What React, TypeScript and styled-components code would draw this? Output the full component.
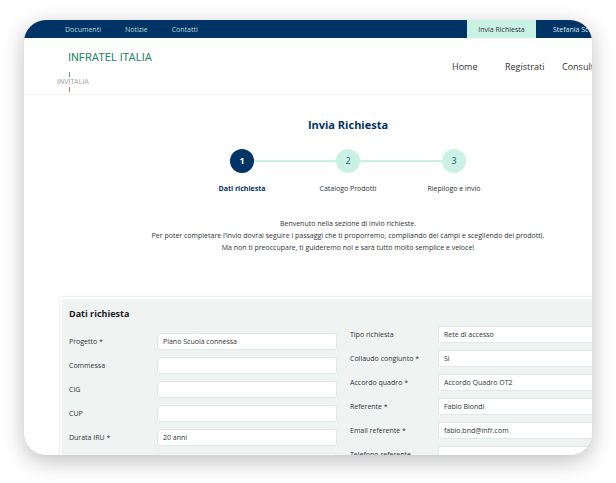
import React from "react";
import styled, { createGlobalStyle } from "styled-components";

const navy = "#003366";
const mint = "#c9f1e4";
const ink = "#2f3336";

const GlobalStyle = createGlobalStyle`
  *, *::before, *::after { box-sizing: border-box; }
  body {
    margin: 0;
    background: #ffffff;
    color: ${ink};
    font-family: "Open Sans", "Noto Sans", sans-serif;
    font-size: 7px;
    line-height: 12px;
    overflow: hidden;
  }
`;

const Stage = styled.div`
  display: flex;
  height: 100vh;
  padding: 20px 24px 28px;
`;

const Frame = styled.div`
  flex: 1;
  min-width: 0;
  overflow: hidden;
  border-radius: 22px;
  background: #ffffff;
  box-shadow: 0 6px 22px rgba(0, 0, 0, 0.26);
`;

/* The page is wider than its frame and runs out of it on the right. */
const Page = styled.div`
  width: calc(100% + 80px);
`;

const TopBar = styled.nav`
  display: flex;
  justify-content: space-between;
  height: 18px;
  padding-left: 41px;
  background: ${navy};
`;

const TopGroup = styled.div`
  display: flex;
  align-items: center;
  gap: 24px;
  padding-top: 2px;
`;

const TopLink = styled.a`
  color: #b5dcd9;
  text-decoration: none;
`;

const Account = styled.div`
  display: flex;
  align-items: center;
  width: 205px;
`;

const RequestButton = styled.button`
  align-self: stretch;
  width: 69px;
  margin-right: 17px;
  padding: 2px 0 0;
  border: 0;
  background: ${mint};
  color: ${ink};
  font: inherit;
`;

const UserLink = styled(TopLink)`
  padding-top: 2px;
  color: #dce9ee;
  white-space: nowrap;
`;

const Header = styled.header`
  display: flex;
  justify-content: space-between;
  height: 57px;
  border-bottom: 1px solid #f5f6f6;
`;

const Logo = styled.div`
  padding: 12px 0 0 33px;
`;

const LogoName = styled.div`
  padding: 1px 0 0 11px;
  color: #23875f;
  font: 11px/14px Roboto, sans-serif;
`;

const LogoBar = styled.div<{ $color: string }>`
  width: 1px;
  height: 5px;
  margin-left: 12px;
  background: ${(p) => p.$color};
`;

const LogoParent = styled.div`
  color: #a3a3a3;
  font: 7px/10px Roboto, sans-serif;
`;

const LogoGap = styled.div`
  height: 7px;
`;

const MainNav = styled.nav`
  display: grid;
  grid-template-columns: 53px 57px 110px;
  align-items: center;
  padding-top: 1px;
  font-size: 9px;
`;

const MainLink = styled.a`
  color: ${ink};
  text-decoration: none;
`;

const Title = styled.h1`
  margin: 23px 0 17px;
  color: ${navy};
  font-size: 11px;
  line-height: 14px;
  text-align: center;
`;

const Steps = styled.ol`
  display: grid;
  grid-template-columns: repeat(3, 106px);
  justify-content: center;
  margin: 0;
  padding: 0;
  list-style: none;
`;

const Step = styled.li<{ $active?: boolean }>`
  display: flex;
  flex-direction: column;
  align-items: center;
  gap: 10px;
  color: ${(p) => (p.$active ? navy : ink)};
  font-weight: ${(p) => (p.$active ? 700 : 400)};
`;

const Track = styled.div`
  display: grid;
  grid-template-columns: 1fr 24px 1fr;
  align-items: center;
  width: 100%;
`;

const Line = styled.span<{ $hidden?: boolean }>`
  height: 2px;
  background: ${(p) => (p.$hidden ? "transparent" : mint)};
`;

const Dot = styled.span<{ $active?: boolean }>`
  display: grid;
  place-items: center;
  height: 24px;
  border-radius: 50%;
  background: ${(p) => (p.$active ? navy : mint)};
  color: ${(p) => (p.$active ? "#ffffff" : "#2b5a7c")};
  font-size: 9px;
`;

const Intro = styled.p`
  margin: 23px 0 43px;
  text-align: center;
`;

const Panel = styled.form`
  margin: 0 36px;
  padding: 8px 16px 24px 7px;
  border: 2px solid #ffffff;
  background: #eff3f2;
  box-shadow: 0 0 2px rgba(0, 0, 0, 0.2);
`;

const PanelTitle = styled.h2`
  margin: 0;
  font-size: 9px;
  line-height: 14px;
  color: #1d2123;
`;

const Columns = styled.div`
  display: grid;
  grid-template-columns: 1fr 1fr;
  align-items: start;
  gap: 13px;
`;

const Column = styled.div<{ $top: number }>`
  display: grid;
  gap: 7px;
  margin-top: ${(p) => p.$top}px;
`;

const Field = styled.label`
  display: grid;
  grid-template-columns: 88px 1fr;
  align-items: center;
`;

const TextBox = styled.input`
  width: 100%;
  min-width: 0;
  height: 17px;
  padding: 0 5px;
  border: 1px solid #e2e8e6;
  border-radius: 3px;
  background: #ffffff;
  color: ${ink};
  font: inherit;
`;

type FieldData = { label: string; value: string };

const leftFields: FieldData[] = [
  { label: "Progetto *", value: "Piano Scuola connessa" },
  { label: "Commessa", value: "" },
  { label: "CIG", value: "" },
  { label: "CUP", value: "" },
  { label: "Durata IRU *", value: "20 anni" },
  { label: "", value: "" },
];

const rightFields: FieldData[] = [
  { label: "Tipo richiesta", value: "Rete di accesso" },
  { label: "Collaudo congiunto *", value: "Si" },
  { label: "Accordo quadro *", value: "Accordo Quadro OT2" },
  { label: "Referente *", value: "Fabio Biondi" },
  { label: "Email referente *", value: "fabio.bnd@infr.com" },
  { label: "Telefono referente", value: "" },
];

const steps = ["Dati richiesta", "Catalogo Prodotti", "Riepilogo e invio"];

function FieldColumn({ fields, top }: { fields: FieldData[]; top: number }) {
  return (
    <Column $top={top}>
      {fields.map((f, i) => (
        <Field key={i}>
          <span>{f.label}</span>
          <TextBox type="text" defaultValue={f.value} />
        </Field>
      ))}
    </Column>
  );
}

export default function App() {
  return (
    <>
      <GlobalStyle />
      <Stage>
        <Frame>
          <Page>
            <TopBar>
              <TopGroup>
                <TopLink href="#documenti">Documenti</TopLink>
                <TopLink href="#notizie">Notizie</TopLink>
                <TopLink href="#contatti">Contatti</TopLink>
              </TopGroup>
              <Account>
                <RequestButton type="button">Invia Richiesta</RequestButton>
                <UserLink href="#profilo">Stefania Sco</UserLink>
              </Account>
            </TopBar>
            <Header>
              <Logo>
                <LogoName>INFRATEL ITALIA</LogoName>
                <LogoGap />
                <LogoBar $color="#4fa283" />
                <LogoParent>INVITALIA</LogoParent>
                <LogoBar $color="#dc6b6b" />
              </Logo>
              <MainNav>
                <MainLink href="#home">Home</MainLink>
                <MainLink href="#registrati">Registrati</MainLink>
                <MainLink href="#consult">Consult</MainLink>
              </MainNav>
            </Header>
            <main>
              <Title>Invia Richiesta</Title>
              <Steps>
                {steps.map((name, i) => (
                  <Step key={name} $active={i === 0}>
                    <Track>
                      <Line $hidden={i === 0} />
                      <Dot $active={i === 0}>{i + 1}</Dot>
                      <Line $hidden={i === steps.length - 1} />
                    </Track>
                    <span>{name}</span>
                  </Step>
                ))}
              </Steps>
              <Intro>
                Benvenuto nella sezione di invio richieste.
                <br />
                Per poter completare l’invio dovrai seguire i passaggi che ti proporremo, compilando dei campi e
                scegliendo dei prodotti.
                <br />
                Ma non ti preoccupare, ti guideremo noi e sarà tutto molto semplice e veloce!
              </Intro>
              <Panel>
                <PanelTitle>Dati richiesta</PanelTitle>
                <Columns>
                  <FieldColumn fields={leftFields} top={12} />
                  <FieldColumn fields={rightFields} top={5} />
                </Columns>
              </Panel>
            </main>
          </Page>
        </Frame>
      </Stage>
    </>
  );
}
